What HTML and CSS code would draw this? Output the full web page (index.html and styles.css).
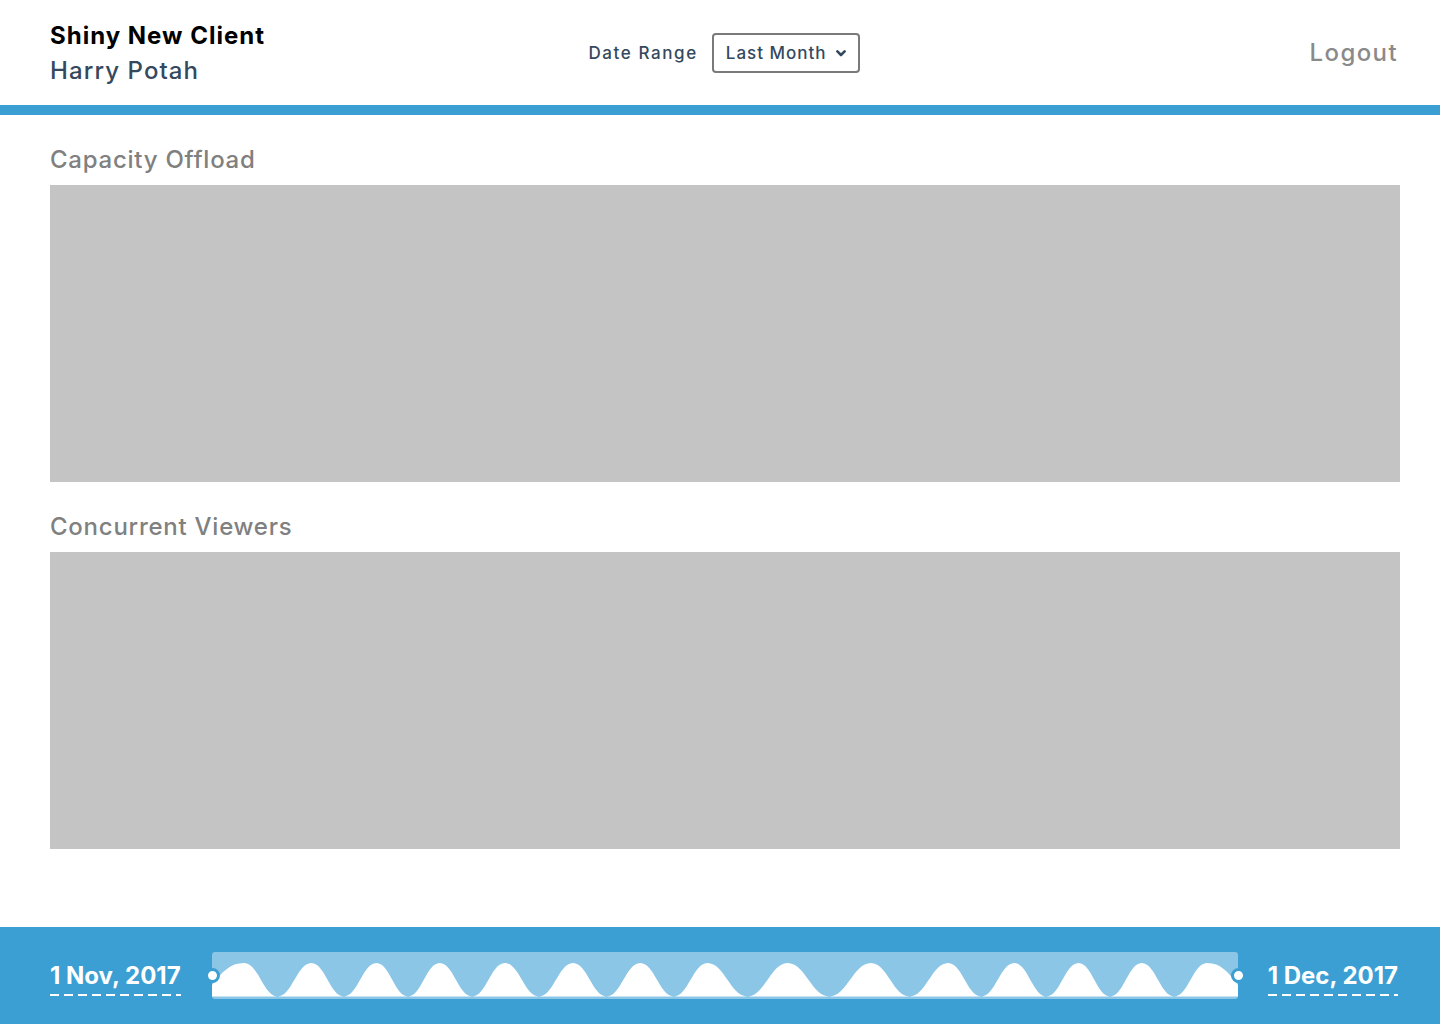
FILE: index.html
```html
<!DOCTYPE html>
<html lang="en">
<head>
<meta charset="utf-8">
<title>Shiny New Client</title>
<link rel="stylesheet" href="styles.css">
</head>
<body>
<div class="page">
  <header class="header">
    <div class="client">
      <div class="client-name">Shiny New Client</div>
      <div class="user-name">Harry Potah</div>
    </div>
    <div class="range">
      <span class="range-label">Date Range</span>
      <button class="select">Last Month
        <svg class="chev" width="10" height="7" viewBox="0 0 10 7"><path d="M1.4 1.4 5 5 8.6 1.4" fill="none" stroke="#34495e" stroke-width="2.6" stroke-linecap="round" stroke-linejoin="round"/></svg>
      </button>
    </div>
    <div class="logout-wrap"><a class="logout">Logout</a></div>
  </header>

  <main class="main">
    <section class="panel">
      <h2 class="panel-title">Capacity Offload</h2>
      <div class="chart"></div>
    </section>
    <section class="panel">
      <h2 class="panel-title">Concurrent Viewers</h2>
      <div class="chart"></div>
    </section>
  </main>

  <footer class="footer">
    <span class="date">1 Nov, 2017</span>
    <div class="slider">
      <svg class="wave" viewBox="0 0 1023 47" preserveAspectRatio="none" width="100%" height="47">
        <rect x="0" y="0" width="1023" height="47" rx="3" fill="#8bc6e6"/>
        <path id="wave" fill="#ffffff" d=""/>
      </svg>
      <span class="handle handle-left"></span>
      <span class="handle handle-right"></span>
    </div>
    <span class="date">1 Dec, 2017</span>
  </footer>
</div>
<script src="script.js"></script>
</body>
</html>
```

FILE: script.js
```js
(function () {
  var off = 213;
  var peaks = [245, 312, 377, 440, 505, 573, 640, 707, 787, 870, 947, 1013, 1077, 1140, 1205].map(function (p) { return p - off; });
  var top = 11, bot = 44.5, W = 1023;
  var d = "M0 44.5 L0 33 ";
  function seg(x1, y1, x2, y2) {
    var dx = (x2 - x1) * 0.42;
    return "C" + (x1 + dx) + " " + y1 + " " + (x2 - dx) + " " + y2 + " " + x2 + " " + y2 + " ";
  }
  d += "C10 20 " + (peaks[0] - 14) + " " + top + " " + peaks[0] + " " + top + " ";
  for (var i = 0; i < peaks.length - 1; i++) {
    var t = (peaks[i] + peaks[i + 1]) / 2;
    d += seg(peaks[i], top, t, bot);
    d += seg(t, bot, peaks[i + 1], top);
  }
  var last = peaks[peaks.length - 1];
  d += "C" + (last + 14) + " " + top + " " + (W - 10) + " 20 " + W + " 33 ";
  d += "L" + W + " 44.5 Z";
  document.getElementById("wave").setAttribute("d", d);
})();
```

FILE: styles.css
```css
* { box-sizing: border-box; }
html, body { margin: 0; padding: 0; }
body {
  font-family: "Inter", "Noto Sans", "Liberation Sans", sans-serif;
  background: #ffffff;
  color: #2c3e50;
}
.page {
  min-height: 100vh;
  display: flex;
  flex-direction: column;
}
.header {
  height: 115px;
  border-bottom: 10px solid #3b9fd3;
  display: grid;
  grid-template-columns: 1fr auto 1fr;
  align-items: center;
  padding: 0 42px 0 50px;
}
.client { display: flex; flex-direction: column; padding-top: 2px; }
.client-name {
  font-size: 24px;
  font-weight: 700;
  color: #000;
  line-height: 34px;
  letter-spacing: 1px;
}
.user-name {
  font-size: 24px;
  font-weight: 500;
  color: #34495e;
  line-height: 36px;
  letter-spacing: 1.1px;
}
.range { display: flex; align-items: center; gap: 14px; }
.range-label { font-size: 17px; font-weight: 500; color: #34495e; letter-spacing: 1.6px; }
.select {
  height: 40px;
  padding: 0 12px 0 12px;
  border: 2px solid #7a7a7a;
  border-radius: 4px;
  background: #fff;
  font-family: inherit;
  font-size: 17px;
  font-weight: 500;
  color: #34495e;
  letter-spacing: 1px;
  display: flex;
  align-items: center;
  gap: 9px;
}
.chev { display: block; margin-top: 1px; }
.logout-wrap { display: flex; justify-content: flex-end; }
.logout {
  font-size: 24px;
  font-weight: 500;
  color: #8a8a8a;
  letter-spacing: 1.4px;
}
.main { padding: 30px 40px 0 50px; }
.panel { margin-bottom: 30px; }
.panel-title {
  margin: 0;
  font-size: 24px;
  font-weight: 500;
  color: #808080;
  line-height: 30px;
  letter-spacing: 0.75px;
  padding-bottom: 10px;
}
.chart {
  height: 297px;
  background: #c4c4c4;
}
.footer {
  margin-top: auto;
  height: 97px;
  background: #3b9fd3;
  display: flex;
  align-items: center;
  padding: 0 42px 0 50px;
}
.date {
  font-size: 24px;
  font-weight: 700;
  color: #fff;
  line-height: 28px;
  padding-bottom: 6px;
  margin-top: 6px;
  background-image: repeating-linear-gradient(to right, #fff 0 9px, transparent 9px 14px);
  background-size: 100% 2px;
  background-repeat: no-repeat;
  background-position: left bottom;
  white-space: nowrap;
}
.slider {
  flex: 1;
  position: relative;
  height: 47px;
  margin: 0 30px 0 31px;
}
.wave { display: block; }
.handle {
  position: absolute;
  top: 16px;
  width: 15px;
  height: 15px;
  border-radius: 50%;
  background: #fff;
  border: 3px solid #3b9fd3;
}
.handle-left { left: -7px; }
.handle-right { right: -8px; }
```
